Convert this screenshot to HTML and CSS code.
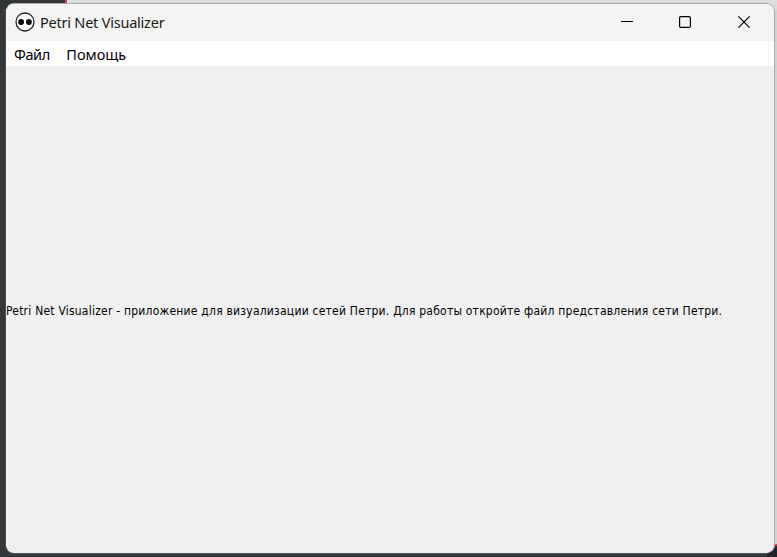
FILE: index.html
```html
<!DOCTYPE html>
<html lang="ru">
<head>
<meta charset="utf-8">
<title>Petri Net Visualizer</title>
<link rel="stylesheet" href="styles.css">
</head>
<body>
<div class="window">
  <header class="titlebar">
    <svg class="logo" width="20" height="20" viewBox="0 0 20 20"><circle cx="10" cy="10" r="9" fill="#fff" stroke="#222" stroke-width="1.3"/><circle cx="6.1" cy="10" r="2.9"/><circle cx="13.9" cy="10" r="2.9"/></svg>
    <h1 class="title">Petri Net Visualizer</h1>
    <div class="controls">
      <svg width="12" height="12" viewBox="0 0 12 12"><path d="M0 5.5h12"/></svg>
      <svg width="12" height="12" viewBox="0 0 12 12"><rect x=".6" y=".6" width="10.8" height="10.8" rx="1.2"/></svg>
      <svg width="12" height="12" viewBox="0 0 12 12"><path d="M.4.4l11.2 11.2M11.6.4L.4 11.6"/></svg>
    </div>
  </header>
  <nav class="menu"><span class="file">Файл</span><span class="help">Помощь</span></nav>
  <main class="content"><p class="message">Petri Net Visualizer - приложение для визуализации сетей Петри. Для работы откройте файл представления сети Петри.</p></main>
</div>
</body>
</html>
```
FILE: styles.css
```css
* { box-sizing: border-box; }
body {
  margin: 0;
  width: 777px;
  height: 557px;
  padding: 3px 2px 3px 5px;
  overflow: hidden;
  background:
    linear-gradient(#d6455c, #d6455c) 65px 0 / 2px 4px no-repeat,
    linear-gradient(#dcdcdc, #dcdcdc) 67px 0 / 710px 10px no-repeat,
    linear-gradient(#d4d4d4 0 544px, #d92f3f 544px 546px, #222427 546px) 767px 0 / 10px 557px no-repeat,
    #34373a;
}
.window {
  display: flex;
  flex-direction: column;
  width: 770px;
  height: 551px;
  border: 1px solid #aaa;
  border-left-color: #4a4c4e;
  border-bottom-color: #55585a;
  border-radius: 9px;
  overflow: hidden;
  background: #f0f0f0;
}
.titlebar {
  display: flex;
  align-items: center;
  flex: 0 0 37px;
  padding: 0 24px 1px 9px;
  background: #f3f3f1;
}
.title {
  margin: 0 0 0 5px;
  font: 14.5px/20px "Noto Sans", sans-serif;
  letter-spacing: -0.22px;
  color: #191919;
  white-space: nowrap;
}
.controls { display: flex; margin-left: auto; }
.controls svg { fill: none; stroke: #000; stroke-width: 1.2; }
.controls svg:nth-child(2) { margin: 0 47px 0 46px; }
.menu {
  display: flex;
  flex: 0 0 25px;
  align-items: center;
  gap: 16.5px;
  padding: 0 8px;
  background: #fff;
  font: 14.5px/20px "Noto Sans", sans-serif;
  color: #000;
}
.file { letter-spacing: -0.4px; }
.content { display: flex; align-items: center; flex: 1; padding-top: 2px; }
.message {
  margin: 0;
  font: 12px/16px "DejaVu Sans Condensed", "DejaVu Sans", sans-serif;
  letter-spacing: 0.22px;
  color: #000;
  white-space: nowrap;
}
```
